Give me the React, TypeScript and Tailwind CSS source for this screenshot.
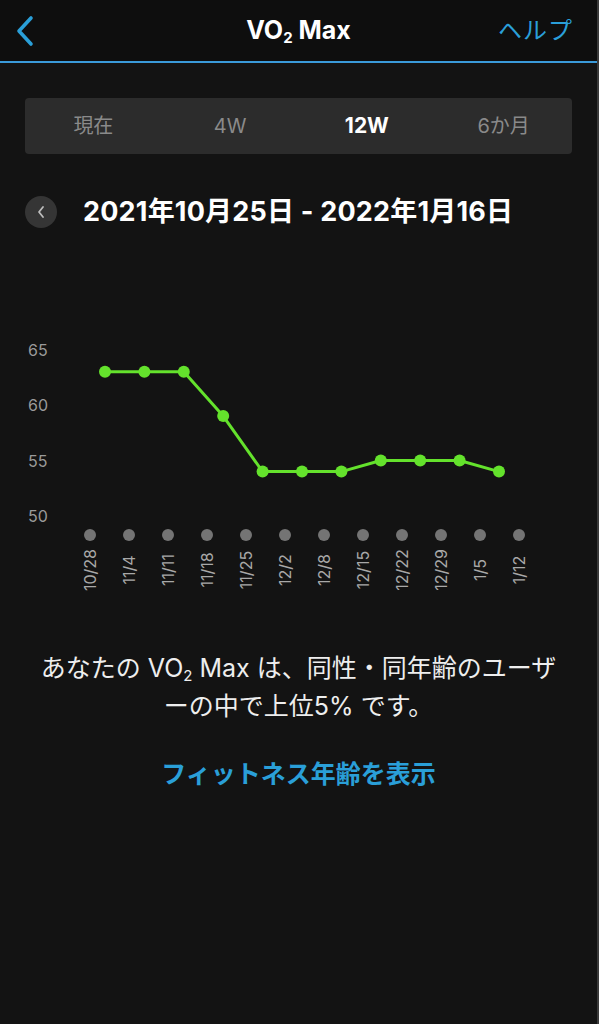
const font = { fontFamily: "Inter, 'Noto Sans CJK JP', sans-serif" };

const tabs = [
  { label: "現在", active: false },
  { label: "4W", active: false },
  { label: "12W", active: true },
  { label: "6か月", active: false },
];

const yTicks = [65, 60, 55, 50];
const weeks = ["10/28", "11/4", "11/11", "11/18", "11/25", "12/2", "12/8", "12/15", "12/22", "12/29", "1/5", "1/12"];
const values = [63, 63, 63, 59, 54, 54, 54, 55, 55, 55, 54];

const yOf = (v: number) => 186 - (v - 50) * 11.1;

function Chart() {
  const pts = values.map((v, i) => ({ x: 105 + i * 39.4, y: yOf(v) }));
  const line = pts.map((p) => `${p.x},${p.y}`).join(" ");
  return (
    <svg width="599" height="270" viewBox="0 0 599 270" className="block" style={font}>
      {yTicks.map((t) => (
        <text key={t} x="28" y={yOf(t)} dominantBaseline="central" fontSize="16" fill="#9a9a9a">
          {t}
        </text>
      ))}
      <polyline points={line} fill="none" stroke="#64e22c" strokeWidth="3" strokeLinejoin="round" />
      {pts.map((p, i) => (
        <circle key={i} cx={p.x} cy={p.y} r="6" fill="#64e22c" />
      ))}
      {weeks.map((w, i) => {
        const x = 90 + i * 39;
        return (
          <g key={w}>
            <circle cx={x} cy="205" r="6" fill="#747474" />
            <text
              x={x}
              y="240"
              transform={`rotate(-90 ${x} 240)`}
              textAnchor="middle"
              dominantBaseline="central"
              fontSize="16"
              fill="#a8a8a8"
            >
              {w}
            </text>
          </g>
        );
      })}
    </svg>
  );
}

export default function App() {
  return (
    <div className="w-[599px] h-[1024px] bg-[#131313] border-r-2 border-[#3a3a3a] overflow-hidden" style={font}>
      {/* Header */}
      <div className="h-[61px] bg-[#0e0e0e] flex items-center justify-between px-[12px] relative">
        <svg width="22" height="32" viewBox="0 0 22 32" className="ml-[2px]">
          <path d="M17 3 L5 16 L17 29" fill="none" stroke="#2a9fd8" strokeWidth="3.6" strokeLinecap="round" strokeLinejoin="round" />
        </svg>
        <div className="absolute left-0 right-0 text-center text-white font-bold text-[25px] pointer-events-none">
          VO<span className="text-[15px] align-[-4px]">2</span> Max
        </div>
        <span className="text-[#2a9fd8] text-[24px] mr-[12px] tracking-[1px]">ヘルプ</span>
      </div>
      <div className="h-[2px] bg-[#3a9ad9]" />

      {/* Period tabs */}
      <div className="mx-[25px] mt-[35px] h-[56px] rounded-[4px] bg-[#2c2c2c] grid grid-cols-4 items-center">
        {tabs.map((t) => (
          <div
            key={t.label}
            className={`text-center ${t.active ? "text-white font-bold text-[21px]" : "text-[#8a8a8a] text-[20px]"}`}
          >
            {t.label}
          </div>
        ))}
      </div>

      {/* Date range */}
      <div className="flex items-center mt-[43px] ml-[25px] h-[30px]">
        <div className="w-[32px] h-[32px] rounded-full bg-[#353535] flex items-center justify-center">
          <svg width="10" height="14" viewBox="0 0 10 14">
            <path d="M7 2 L3 7 L7 12" fill="none" stroke="#bdbdbd" strokeWidth="1.8" strokeLinecap="round" strokeLinejoin="round" />
          </svg>
        </div>
        <div className="ml-[26px] text-white font-bold text-[27px] tracking-[0.2px]">2021年10月25日 - 2022年1月16日</div>
      </div>

      {/* Chart */}
      <div className="mt-[103px]">
        <Chart />
      </div>

      {/* Summary */}
      <p className="mt-[53px] px-[30px] text-center text-[#eeeeee] text-[25px] leading-[30px]">
        あなたの VO<span className="text-[15px] align-[-4px]">2</span> Max は、同性・同年齢のユーザ
        <br />
        ーの中で上位5% です。
      </p>
      <div className="mt-[38px] text-center text-[#2a9fd8] font-bold text-[25px] leading-[30px]">
        フィットネス年齢を表示
      </div>
    </div>
  );
}
